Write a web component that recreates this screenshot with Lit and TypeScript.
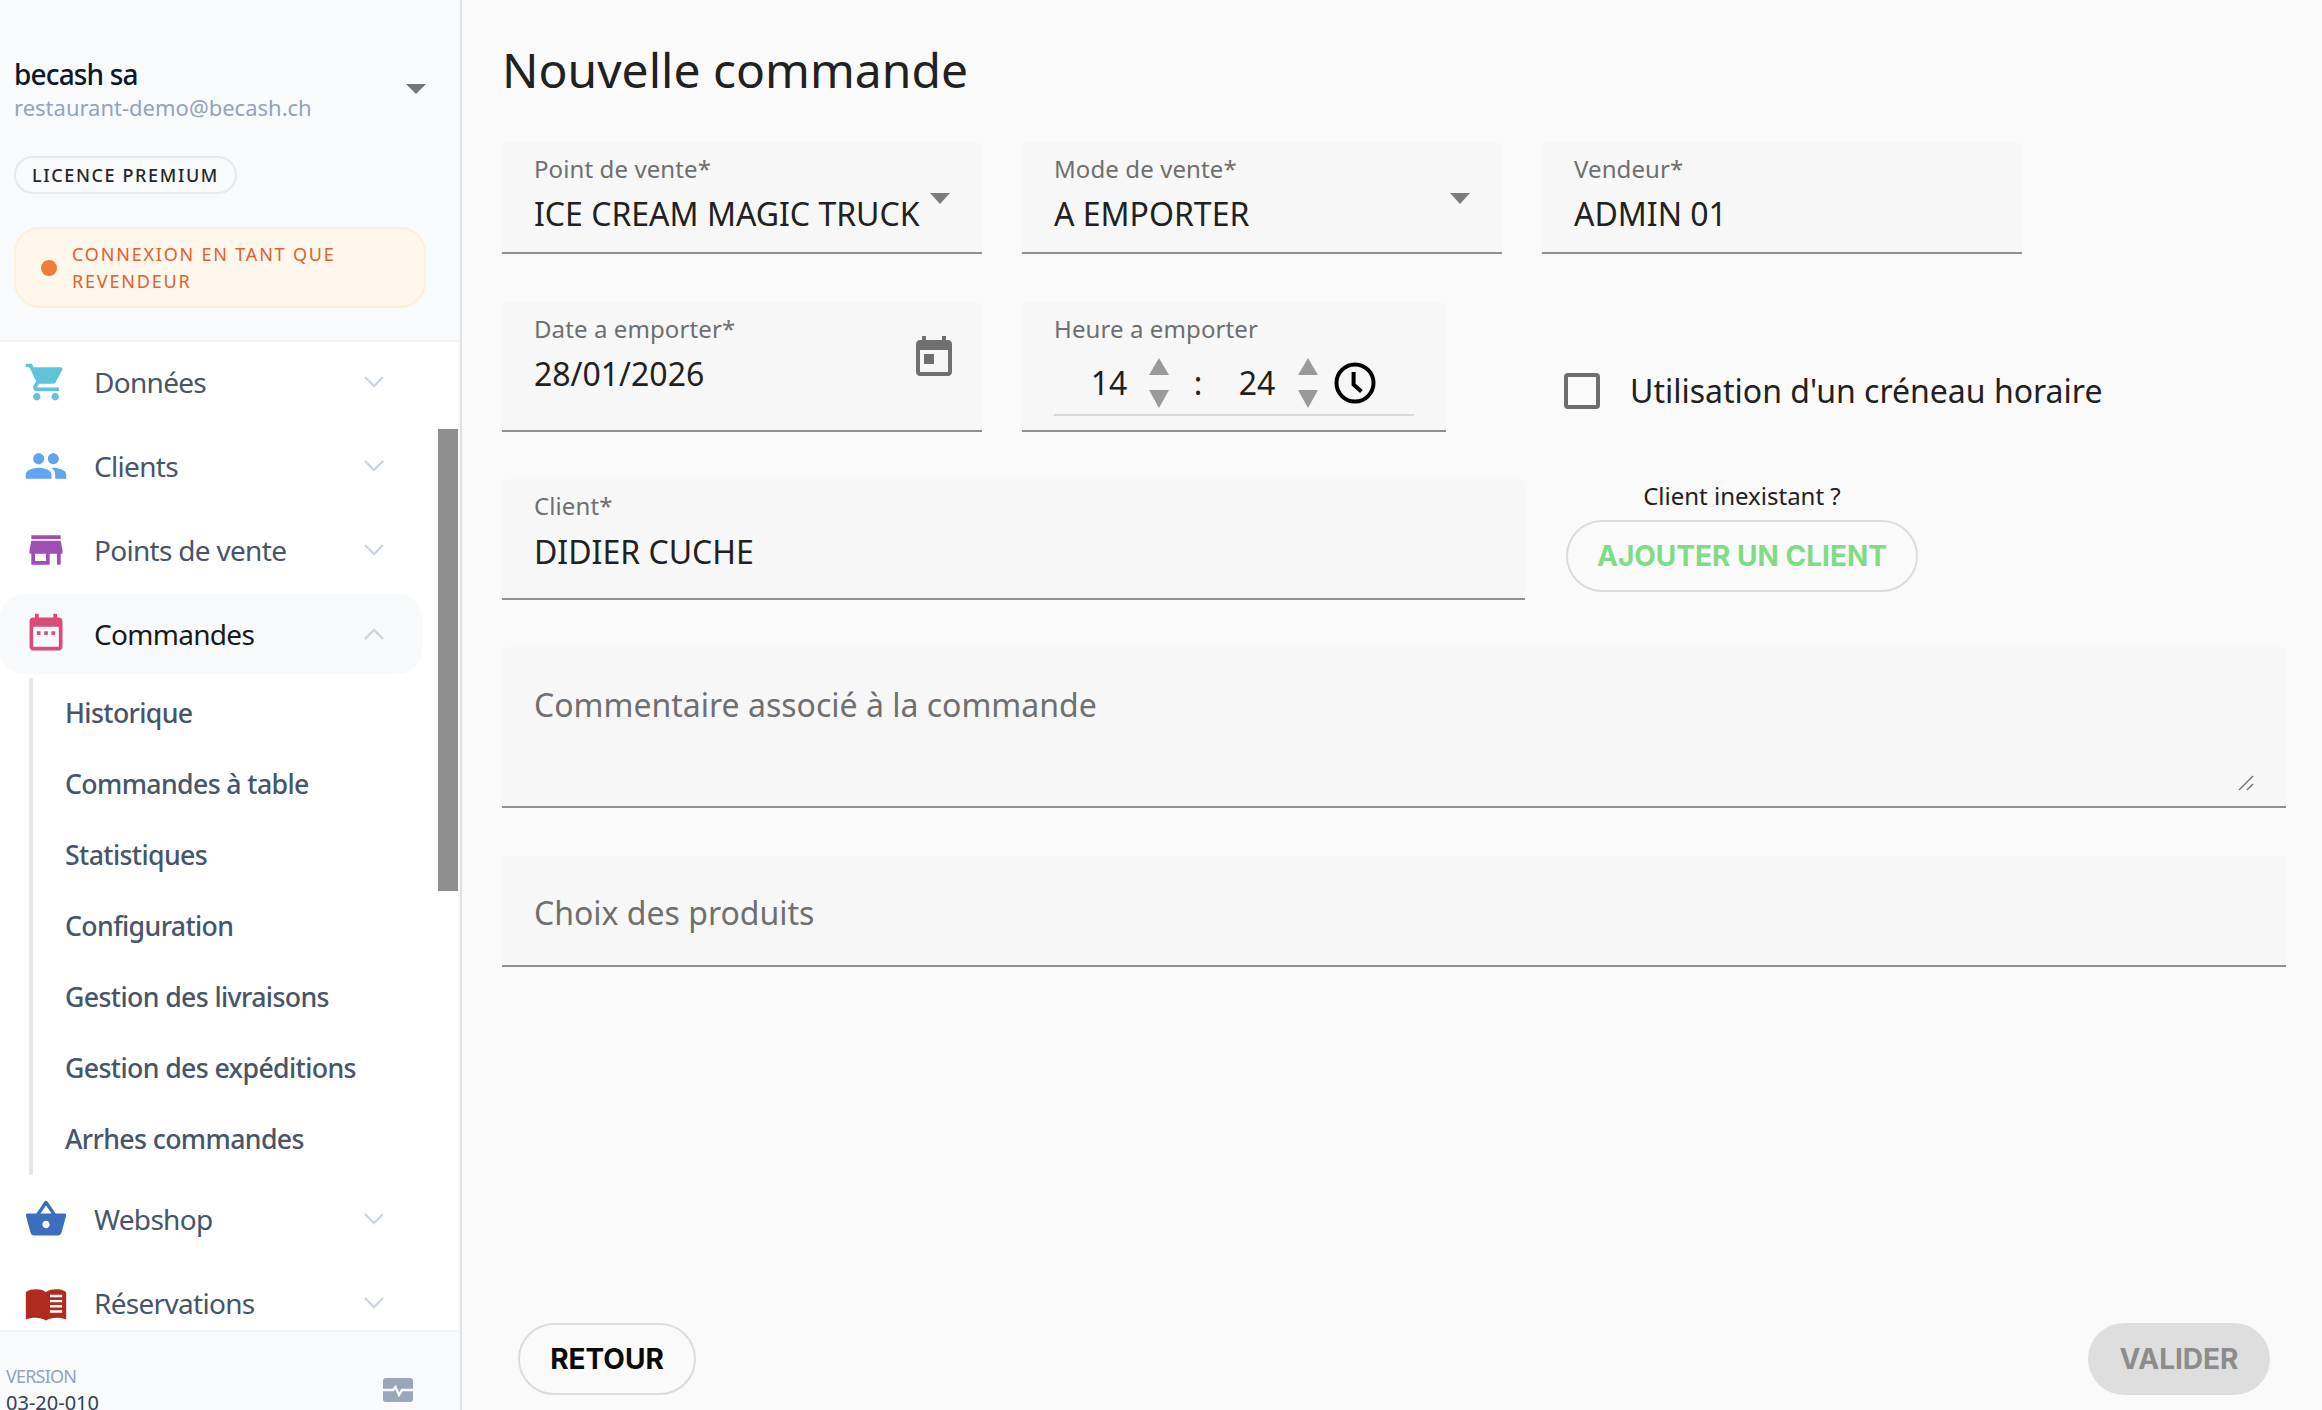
import { LitElement, html, css, svg } from "lit";
import { customElement } from "lit/decorators.js";

const ICONS: Record<string, any> = {
  cart: svg`<path d="M7 18c-1.1 0-1.99.9-1.99 2S5.9 22 7 22s2-.9 2-2-.9-2-2-2zM1 2v2h2l3.6 7.59-1.35 2.45c-.16.28-.25.61-.25.96 0 1.1.9 2 2 2h12v-2H7.42c-.14 0-.25-.11-.25-.25l.03-.12.9-1.63h7.45c.75 0 1.41-.41 1.75-1.03l3.58-6.49c.08-.14.12-.31.12-.48 0-.55-.45-1-1-1H5.21l-.94-2H1zm16 16c-1.1 0-1.99.9-1.99 2s.89 2 1.99 2 2-.9 2-2-.9-2-2-2z"/>`,
  people: svg`<path d="M16 11c1.66 0 2.99-1.34 2.99-3S17.66 5 16 5c-1.66 0-3 1.34-3 3s1.34 3 3 3zm-8 0c1.66 0 2.99-1.34 2.99-3S9.66 5 8 5C6.34 5 5 6.34 5 8s1.34 3 3 3zm0 2c-2.33 0-7 1.17-7 3.5V19h14v-2.5c0-2.33-4.67-3.5-7-3.5zm8 0c-.29 0-.62.02-.97.05 1.16.84 1.97 1.97 1.97 3.45V19h6v-2.5c0-2.33-4.67-3.5-7-3.5z"/>`,
  store: svg`<path d="M20 4H4v2h16V4zm1 10v-2l-1-5H4l-1 5v2h1v6h10v-6h4v6h2v-6h1zm-9 4H6v-4h6v4z"/>`,
  cal: svg`<path d="M19 3h-1V1h-2v2H8V1H6v2H5c-1.11 0-1.99.9-1.99 2L3 19c0 1.1.89 2 2 2h14c1.1 0 2-.9 2-2V5c0-1.1-.9-2-2-2zm0 16H5V8h14v11z"/><rect x="7" y="10.5" width="2" height="2"/><rect x="11" y="10.5" width="2" height="2"/><rect x="15" y="10.5" width="2" height="2"/>`,
  basket: svg`<path d="M17.21 9l-4.38-6.56c-.19-.28-.51-.42-.83-.42-.32 0-.64.14-.83.43L6.79 9H2c-.55 0-1 .45-1 1 0 .09.01.18.04.27l2.54 9.27c.23.84 1 1.46 1.92 1.46h13c.92 0 1.69-.62 1.93-1.46l2.54-9.27L23 10c0-.55-.45-1-1-1h-4.79zM9 9l3-4.4L15 9H9zm3 8c-1.1 0-2-.9-2-2s.9-2 2-2 2 .9 2 2-.9 2-2 2z"/>`,
  book: svg`<path d="M1 6c1.45-1.1 3.55-1.5 5.5-1.5S10.55 4.9 12 6c1.45-1.1 3.55-1.5 5.5-1.5 1.95 0 3.9.3 5.5 1.5v15c-3-1.3-8-1.5-11 .5-3-2-8-1.8-11-.5z"/><path d="M14.2 8.2h6.6M14.2 11h6.6M14.2 13.8h6.6M14.2 16.6h6.6" stroke="#fff" stroke-width="1.3" fill="none"/>`,
};

const chevron = (up = false) => html`<svg class="chev" viewBox="0 0 24 24" fill="none" stroke="#cbd5e1" stroke-width="2.4">
  <path d=${up ? "M3 17l9-9 9 9" : "M3 7l9 9 9-9"}/></svg>`;

const navIcon = (name: string, color: string) => html`<svg class="nicon" viewBox="0 0 24 24" fill=${color}>${ICONS[name]}</svg>`;

@customElement("app-sidebar")
class AppSidebar extends LitElement {
  static styles = css`
    :host { display: flex; flex-direction: column; width: 462px; height: 1410px; flex: none; box-sizing: border-box;
      background: #f9fafc; border-right: 2px solid #e0e1e6; font-family: "Noto Sans", sans-serif; overflow: hidden; }
    .head { height: 342px; flex: none; box-sizing: border-box; padding: 56px 0 0 14px; border-bottom: 2px solid #f3f4f8; }
    .acct { display: flex; justify-content: space-between; width: 412px; }
    .name { font-size: 28px; line-height: 36px; font-weight: 500; color: #0f172a; letter-spacing: -0.84px; }
    .mail { font-size: 22px; line-height: 30px; color: #94a3b8; }
    .drop { width: 0; height: 0; border-left: 10px solid transparent; border-right: 10px solid transparent;
      border-top: 10px solid #757575; margin-top: 28px; }
    .badge { display: inline-block; margin-top: 34px; box-sizing: border-box; height: 38px; line-height: 34px; padding: 0 16px;
      border: 2px solid #e8e9ec; border-radius: 19px; font-size: 18px; font-weight: 500; letter-spacing: 1.62px; color: #262626; }
    .alert { margin-top: 33px; width: 412px; height: 81px; box-sizing: border-box; display: flex; align-items: center; gap: 15px;
      padding: 0 20px 0 25px; background: #fff6ec; border: 2px solid #fdefdc; border-radius: 26px;
      font-size: 18px; line-height: 27px; letter-spacing: 1.8px; color: #e0622a; }
    .dot { width: 16px; height: 16px; border-radius: 50%; background: #ed7d37; flex: none; }
    .nav { flex: 1; min-height: 0; position: relative; overflow: hidden; background: #fff; width: 458px; }
    .item { height: 80px; width: 422px; margin: 0 0 4px; box-sizing: border-box; display: flex; align-items: center;
      padding: 0 36px 0 24px; border-radius: 24px; font-size: 28px; letter-spacing: -0.7px; color: #475569; }
    .item.open { background: #f8f9fb; color: #1a1a1a; }
    .nicon { width: 44px; height: 44px; flex: none; margin-right: 26px; }
    .lbl { flex: 1; margin-top: -1px; }
    .chev { width: 24px; height: 24px; flex: none; }
    .sub { margin: 0 0 4px 29px; border-left: 4px solid #e6e7ec; }
    .sub div { height: 71px; line-height: 69px; padding-left: 32px; font-size: 26.7px; letter-spacing: -0.62px; color: #475569; font-weight: 500; }
    .bar { position: absolute; left: 438px; top: 87px; width: 20px; height: 462px; background: #8f8f8f; }
    .foot { height: 80px; flex: none; box-sizing: border-box; overflow: hidden; padding: 32px 45px 0 6px; border-top: 2px solid #f3f4f8;
      display: flex; justify-content: space-between; background: #f9fafc; width: 458px; }
    .ver { font-size: 18px; line-height: 24px; color: #94a3b8; letter-spacing: -0.8px; }
    .num { font-size: 20px; line-height: 30px; color: #334155; }
    .pulse { width: 30px; height: 24px; margin-top: 14px; }
  `;
  render() {
    const sub = ["Historique", "Commandes à table", "Statistiques", "Configuration", "Gestion des livraisons", "Gestion des expéditions", "Arrhes commandes"];
    return html`
      <div class="head">
        <div class="acct">
          <div>
            <div class="name">becash sa</div>
            <div class="mail">restaurant-demo@becash.ch</div>
          </div>
          <div class="drop"></div>
        </div>
        <div class="badge">LICENCE PREMIUM</div>
        <div class="alert"><span class="dot"></span><span>CONNEXION EN TANT QUE REVENDEUR</span></div>
      </div>
      <div class="nav">
        <div class="item">${navIcon("cart", "#5fc4d9")}<span class="lbl">Données</span>${chevron()}</div>
        <div class="item">${navIcon("people", "#60a5f0")}<span class="lbl">Clients</span>${chevron()}</div>
        <div class="item">${navIcon("store", "#a04db5")}<span class="lbl">Points de vente</span>${chevron()}</div>
        <div class="item open">${navIcon("cal", "#d94c78")}<span class="lbl">Commandes</span>${chevron(true)}</div>
        <div class="sub">${sub.map((s) => html`<div>${s}</div>`)}</div>
        <div class="item">${navIcon("basket", "#3b6fbd")}<span class="lbl">Webshop</span>${chevron()}</div>
        <div class="item">${navIcon("book", "#b02a20")}<span class="lbl">Réservations</span>${chevron()}</div>
        <div class="bar"></div>
      </div>
      <div class="foot">
        <div><div class="ver">VERSION</div><div class="num">03-20-010</div></div>
        <svg class="pulse" viewBox="0 0 30 24"><rect width="30" height="24" rx="3" fill="#9aa7bb"/>
          <path d="M0 12h10l2.5-3 3.5 8 3-5h11" fill="none" stroke="#f9fafc" stroke-width="2.4"/></svg>
      </div>
    `;
  }
}

@customElement("app-root")
class AppRoot extends LitElement {
  static styles = css`
    :host { display: flex; width: 100%; height: 100vh; overflow: hidden; background: #fafafa; font-family: "Noto Sans", sans-serif; }
    .main { flex: 1; min-width: 0; box-sizing: border-box; padding: 0 36px 15px 40px; display: flex; flex-direction: column; }
    h1 { margin: 0; height: 142px; box-sizing: border-box; padding-top: 35px; font-size: 48px; line-height: 70px; font-weight: 400; color: #212121; }
    .row { display: flex; gap: 40px; }
    .field { box-sizing: border-box; background: #f7f7f7; border-bottom: 2px solid #8f8f8f; border-radius: 6px 6px 0 0;
      padding: 11px 32px 0; display: flex; justify-content: space-between; }
    .label { font-size: 24px; line-height: 32px; color: #6f6f6f; letter-spacing: 0.1px; margin-bottom: 7px; }
    .value { font-size: 32px; line-height: 44px; color: #212121; white-space: nowrap; }
    .w480 { width: 480px; height: 112px; }
    .tri { width: 0; height: 0; border-left: 10px solid transparent; border-right: 10px solid transparent; border-top: 11px solid #7b7b7b; flex: none; margin: 40px 0 0 0; }
    .row2 { margin-top: 48px; align-items: flex-start; }
    .row2 .field { height: 130px; }
    .calico { width: 48px; height: 48px; margin: 21px -8px 0 0; flex: none; fill: #6f6f6f; }
    .time { width: 424px; display: block; }
    .time .label { margin-bottom: 0; }
    .clock-row { display: flex; align-items: center; height: 71px; padding-top: 6px; width: 360px; border-bottom: 2px solid #d9d9d9; box-sizing: border-box; color: #212121; font-size: 32px; }
    .num { width: 70px; text-align: center; margin-left: 20px; }
    .spin { display: flex; flex-direction: column; gap: 15px; width: 20px; margin-left: 5px; }
    .up { width: 0; height: 0; border-left: 10px solid transparent; border-right: 10px solid transparent; border-bottom: 17px solid #9a9a9a; }
    .dn { width: 0; height: 0; border-left: 10px solid transparent; border-right: 10px solid transparent; border-top: 18px solid #9a9a9a; }
    .colon { width: 30px; text-align: center; margin-left: 14px; margin-right: -26px; }
    .num.b { margin-left: 35px; }
    .num.b + .spin { margin-left: 6px; }
    .clock { width: 44px; height: 44px; margin-left: 15px; flex: none; }
    .check { display: flex; align-items: center; gap: 30px; margin: 67px 0 0 78px; font-size: 32px; line-height: 44px; color: #212121; white-space: nowrap; }
    .box { width: 36px; height: 36px; box-sizing: border-box; border: 4px solid #6e6e6e; border-radius: 4px; flex: none; }
    .row3 { margin-top: 47px; gap: 41px; }
    .client { width: 1023px; height: 121px; display: block; }
    .client .label { margin-bottom: 8px; }
    .cta { width: 352px; display: flex; flex-direction: column; align-items: center; }
    .cta span { font-size: 24px; line-height: 34px; color: #212121; height: 41px; }
    button { box-sizing: border-box; font-family: Inter, sans-serif; font-weight: 700; font-size: 28px; border-radius: 36px; height: 72px; background: transparent; border: 2px solid #dcdcdc; padding: 0; }
    .add { width: 352px; color: #7fdc85; }
    .area { display: block; margin-top: 47px; height: 161px; padding-top: 37px; position: relative; }
    .big { font-size: 32px; line-height: 42px; color: #6f6f6f; }
    .grip { position: absolute; right: 32px; bottom: 15px; width: 16px; height: 16px; }
    .choice { display: block; margin-top: 48px; height: 111px; padding-top: 36px; }
    .foot { margin-top: auto; padding: 0 16px; display: flex; justify-content: space-between; }
    .back { width: 178px; color: #0a0a0a; }
    .ok { width: 182px; background: #dedede; border: none; color: #8c8c8c; }
  `;
  render() {
    return html`
      <app-sidebar></app-sidebar>
      <div class="main">
        <h1>Nouvelle commande</h1>
        <div class="row row1">
          <div class="field w480"><div><div class="label">Point de vente*</div><div class="value">ICE CREAM MAGIC TRUCK</div></div><div class="tri"></div></div>
          <div class="field w480"><div><div class="label">Mode de vente*</div><div class="value">A EMPORTER</div></div><div class="tri"></div></div>
          <div class="field w480"><div><div class="label">Vendeur*</div><div class="value">ADMIN 01</div></div></div>
        </div>
        <div class="row row2">
          <div class="field w480">
            <div><div class="label">Date a emporter*</div><div class="value">28/01/2026</div></div>
            <svg class="calico" viewBox="0 0 24 24"><path d="M19 3h-1V1h-2v2H8V1H6v2H5c-1.11 0-1.99.9-1.99 2L3 19c0 1.1.89 2 2 2h14c1.1 0 2-.9 2-2V5c0-1.1-.9-2-2-2zm0 16H5V8h14v11zM7 10h5v5H7z"/></svg>
          </div>
          <div class="field time">
            <div class="label">Heure a emporter</div>
            <div class="clock-row">
              <span class="num">14</span>
              <span class="spin"><i class="up"></i><i class="dn"></i></span>
              <span class="colon">:</span>
              <span class="num b">24</span>
              <span class="spin"><i class="up"></i><i class="dn"></i></span>
              <svg class="clock" viewBox="0 0 44 44" fill="none" stroke="#000" stroke-width="4"><circle cx="22" cy="22" r="18.5"/><path d="M20.6 11v12.5l7.8 7"/></svg>
            </div>
          </div>
          <div class="check"><span class="box"></span><span>Utilisation d'un créneau horaire</span></div>
        </div>
        <div class="row row3">
          <div class="field client"><div class="label">Client*</div><div class="value">DIDIER CUCHE</div></div>
          <div class="cta"><span>Client inexistant ?</span><button class="add">AJOUTER UN CLIENT</button></div>
        </div>
        <div class="field area"><div class="big">Commentaire associé à la commande</div>
          <svg class="grip" viewBox="0 0 16 16" stroke="#707070" stroke-width="1.4"><path d="M1 15L15 1M9 15l6-6"/></svg></div>
        <div class="field choice"><div class="big">Choix des produits</div></div>
        <div class="foot"><button class="back">RETOUR</button><button class="ok">VALIDER</button></div>
      </div>
    `;
  }
}
